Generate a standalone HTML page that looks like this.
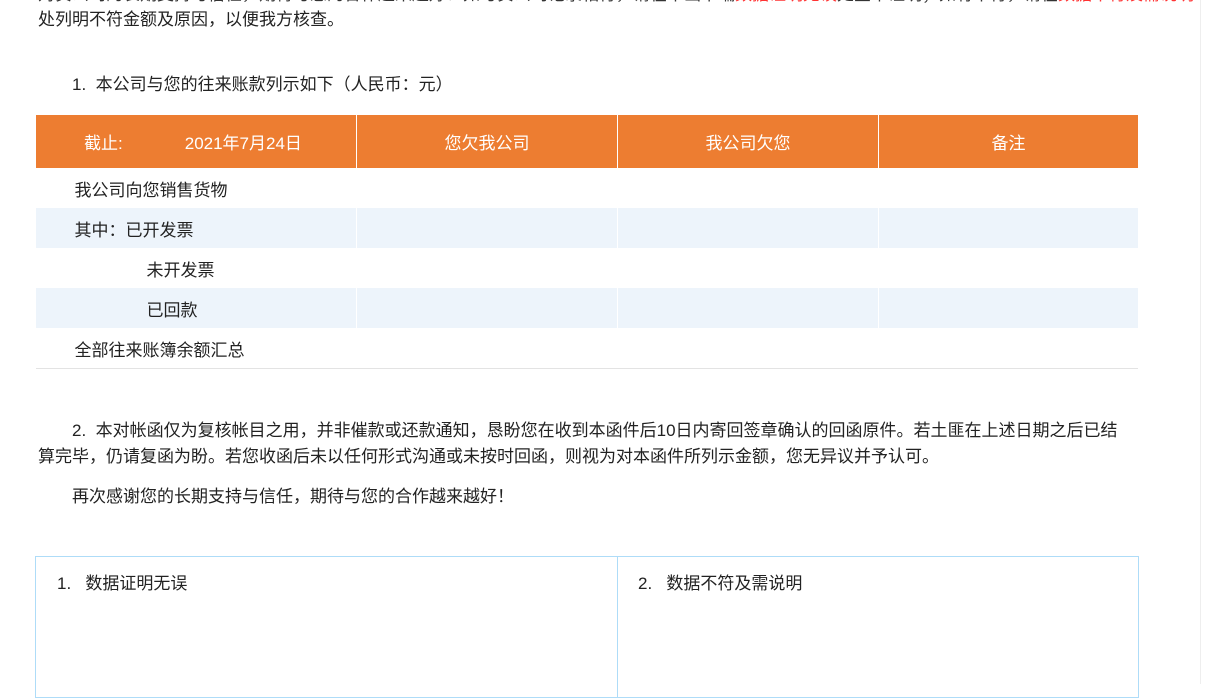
<!DOCTYPE html>
<html><head><meta charset="utf-8"><style>
body{margin:0;width:1212px;height:684px;overflow:hidden;background:#fff;font-family:"Liberation Sans","Noto Sans CJK SC",sans-serif;font-size:17px;color:#222;position:relative}
.a{position:absolute;white-space:nowrap;line-height:20px}
.red{color:#f33}
table{position:absolute;left:35px;top:115px;border-collapse:collapse;width:1103px;font-size:17px}
td{padding:0;height:40px;border-left:1px solid #fff}
td:first-child{border-left:none}
tr.h td{background:#ED7D31;color:#fff;height:53px;text-align:center;border-left:1px solid #fff}
tr.b td{background:#EDF4FB}
tr.last td{border-bottom:1px solid #e3e3e3}
.box{position:absolute;left:35px;top:556px;width:1102px;height:140px;border:1px solid #AEDCF8}
.box .d{position:absolute;left:581px;top:0;bottom:0;border-left:1px solid #AEDCF8}
</style></head><body>
<div class="a" style="left:38px;top:-15px;color:#333">对贵公司的长期支持与信任，期待与您的合作越来越好！如与贵公司记录相符，请在本函下端<span class="red">数据证明无误</span>处签章证明；如有不符，请在<span class="red">数据不符及需说明</span></div>
<div class="a" style="left:38px;top:10px">处列明不符金额及原因，以便我方核查。</div>
<div class="a" style="left:72px;top:75px">1.&nbsp;&nbsp;本公司与您的往来账款列示如下（人民币：元）</div>
<table>
<tr class="h"><td style="width:320px;text-align:left"><span style="margin-left:48px">截止:</span><span style="margin-left:62px">2021年7月24日</span></td><td style="width:260px">您欠我公司</td><td style="width:260px">我公司欠您</td><td>备注</td></tr>
<tr><td style="padding-left:39px">我公司向您销售货物</td><td></td><td></td><td></td></tr>
<tr class="b"><td style="padding-left:39px">其中：已开发票</td><td></td><td></td><td></td></tr>
<tr><td style="padding-left:111px">未开发票</td><td></td><td></td><td></td></tr>
<tr class="b"><td style="padding-left:111px">已回款</td><td></td><td></td><td></td></tr>
<tr class="last"><td style="padding-left:39px">全部往来账簿余额汇总</td><td></td><td></td><td></td></tr>
</table>
<div class="a" style="left:72px;top:421px">2.&nbsp;&nbsp;本对帐函仅为复核帐目之用，并非催款或还款通知，恳盼您在收到本函件后10日内寄回签章确认的回函原件。若土匪在上述日期之后已结</div>
<div class="a" style="left:38px;top:447px">算完毕，仍请复函为盼。若您收函后未以任何形式沟通或未按时回函，则视为对本函件所列示金额，您无异议并予认可。</div>
<div class="a" style="left:72px;top:487px">再次感谢您的长期支持与信任，期待与您的合作越来越好！</div>
<div class="box"><div class="d"></div>
<div class="a" style="left:21px;top:17px">1.&nbsp;&nbsp;&nbsp;数据证明无误</div>
<div class="a" style="left:602px;top:17px">2.&nbsp;&nbsp;&nbsp;数据不符及需说明</div>
</div>
<div style="position:absolute;left:1200px;top:0;width:1px;height:684px;background:#eee"></div>
</body></html>
